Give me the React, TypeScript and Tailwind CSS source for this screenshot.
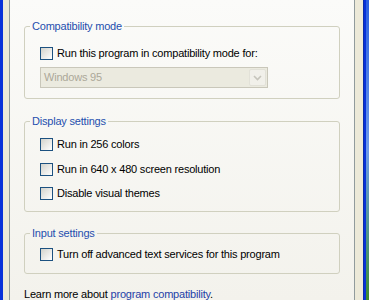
import React from "react";

const font = { fontFamily: '"Liberation Sans", Arial, sans-serif' };

const CheckRow = ({ label }: { label: string }) => (
  <div className="flex items-center h-[13px] gap-[4px]">
    <span className="w-[13px] h-[13px] shrink-0 border border-[#1C5180] bg-linear-to-br from-[#D3D3CC] to-white" />
    <span className="leading-[13px] whitespace-nowrap">{label}</span>
  </div>
);

const GroupBox = ({
  title,
  className,
  children,
}: {
  title: string;
  className: string;
  children: React.ReactNode;
}) => (
  <fieldset className={`border border-[#D0D0BF] rounded-[3px] ${className}`}>
    <legend className="ml-[5px] px-[2px] leading-[13px] text-[#1F4FAE]">{title}</legend>
    {children}
  </fieldset>
);

export default function App() {
  return (
    <div
      className="w-[369px] h-[300px] overflow-hidden flex text-[11px] tracking-[-0.2px] text-black"
      style={font}
    >
      {/* window frame left */}
      <div className="w-[3px] bg-[#0831D9] shrink-0" />
      <div className="w-[6px] bg-[#ECE9D8] shrink-0" />

      {/* tab page */}
      <div className="w-[346px] shrink-0 border-x border-[#919B9C] bg-linear-to-b from-[#FBFBF9] to-[#F3F2EC] px-[14px] flex flex-col">
        <div className="mt-[-10px] leading-[13px] whitespace-nowrap">matches that earlier version.</div>

        <GroupBox title="Compatibility mode" className="mt-[17px]">
          <div className="pl-[15px] pt-[14px] pb-[10px] flex flex-col gap-[7px]">
            <CheckRow label="Run this program in compatibility mode for:" />
            <div className="w-[228px] h-[21px] border border-[#C9C7BA] bg-[#EBEADF] flex items-center justify-between pl-[3px] pr-[1px]">
              <span className="text-[#ACA899] leading-[13px]">Windows 95</span>
              <span className="w-[17px] h-[17px] bg-[#F1F0EA] border border-[#E2E1D8] rounded-[2px] flex items-center justify-center">
                <svg width="9" height="6" viewBox="0 0 9 6">
                  <path d="M1 1 L4.5 4.5 L8 1" fill="none" stroke="#C6C5BC" strokeWidth="1.6" />
                </svg>
              </span>
            </div>
          </div>
        </GroupBox>

        <GroupBox title="Display settings" className="mt-[16px]">
          <div className="pl-[15px] pt-[10px] pb-[11px] flex flex-col">
            <CheckRow label="Run in 256 colors" />
            <div className="h-[12px]" />
            <CheckRow label="Run in 640 x 480 screen resolution" />
            <div className="h-[11px]" />
            <CheckRow label="Disable visual themes" />
          </div>
        </GroupBox>

        <GroupBox title="Input settings" className="mt-[15px]">
          <div className="pl-[15px] pt-[8px] pb-[12px]">
            <CheckRow label="Turn off advanced text services for this program" />
          </div>
        </GroupBox>

        <div className="mt-[14px] leading-[13px] whitespace-nowrap">
          Learn more about <span className="text-[#1F3FA8]">program compatibility</span>.
        </div>
      </div>

      {/* dialog margin and frame right */}
      <div className="w-[8px] bg-[#ECE9D8] shrink-0" />
      <div className="w-[1px] bg-[#0A2EA8] shrink-0" />
      <div className="w-[2px] bg-[#0831D9] shrink-0" />
      <div className="flex-1 bg-linear-to-b from-[#2A5FE0] via-[#6E9BEA] to-[#3F8A2A]" />
    </div>
  );
}
